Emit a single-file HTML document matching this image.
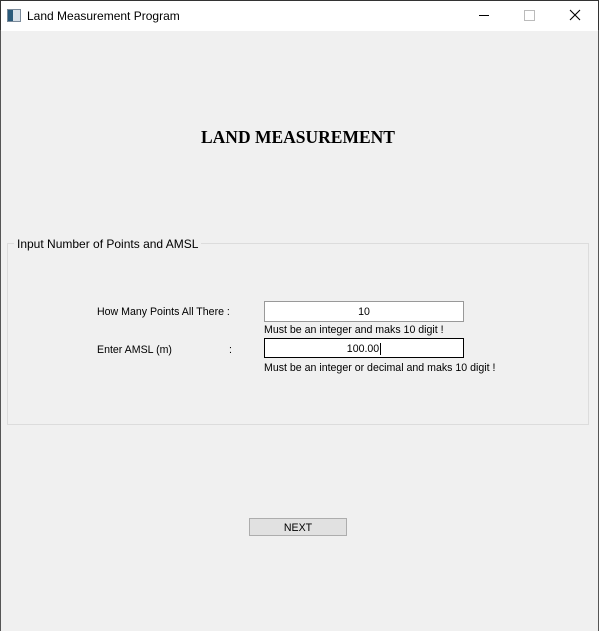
<!DOCTYPE html>
<html><head><style>
body{margin:0;width:599px;height:631px;overflow:hidden;background:#f0f0f0;font-family:"Liberation Sans",sans-serif;position:relative}
.a{position:absolute;white-space:nowrap}
.t{font-size:10.6px;color:#000}
</style></head><body>
<div class="a" style="left:0;top:0;width:597px;height:30px;background:#fff;border:1px solid #333;border-bottom:none"></div>
<div class="a" style="left:0;top:30px;width:1px;height:601px;background:#555"></div>
<div class="a" style="left:598px;top:30px;width:1px;height:601px;background:#555"></div>
<div class="a" style="left:7px;top:9px;width:12px;height:11px;border:1px solid #7a8a9a;background:linear-gradient(90deg,#2a5a7a 0 5px,#d8e0e8 5px)"></div>
<div class="a" style="left:27px;top:9px;font-size:12px">Land Measurement Program</div>
<div class="a" style="left:479px;top:15px;width:10px;height:1px;background:#000"></div>
<div class="a" style="left:524px;top:10px;width:9px;height:9px;border:1px solid #bbb"></div>
<svg class="a" style="left:569px;top:9px" width="12" height="12"><path d="M1 1L11 11M11 1L1 11" stroke="#000" stroke-width="1.1"/></svg>
<div class="a" style="left:0;top:127px;width:596px;text-align:center;font-family:'Liberation Serif',serif;font-weight:bold;font-size:17.5px">LAND MEASUREMENT</div>
<div class="a" style="left:7px;top:243px;width:580px;height:180px;border:1px solid #dcdcdc"></div>
<div class="a" style="left:14px;top:237px;padding:0 3px;background:#f0f0f0;font-size:12px;color:#000">Input Number of Points and AMSL</div>
<div class="a t" style="left:97px;top:306px">How Many Points All There :</div>
<div class="a" style="left:264px;top:301px;width:198px;height:19px;background:#fff;border:1px solid #999;font-size:10.6px;text-align:center;line-height:21px">10</div>
<div class="a t" style="left:264px;top:324px">Must be an integer and maks 10 digit !</div>
<div class="a t" style="left:97px;top:344px">Enter AMSL (m)</div>
<div class="a t" style="left:229px;top:344px">:</div>
<div class="a" style="left:264px;top:338px;width:198px;height:18px;background:#fff;border:1px solid #000;font-size:10.6px;text-align:center;line-height:20px">100.00<span style="border-left:1px solid #000;margin-left:1px"></span></div>
<div class="a t" style="left:264px;top:362px">Must be an integer or decimal and maks 10 digit !</div>
<div class="a" style="left:249px;top:518px;width:96px;height:16px;background:#e1e1e1;border:1px solid #adadad;font-size:10.6px;text-align:center;line-height:18px">NEXT</div>
</body></html>
